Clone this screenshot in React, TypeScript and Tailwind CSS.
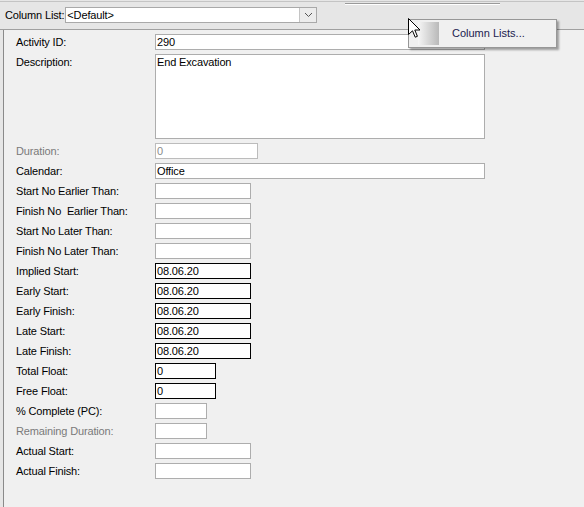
import React from 'react';

type Row = {
  label: string;
  value?: string;
  width: number;
  kind?: 'normal' | 'strong' | 'disabled';
  dimLabel?: boolean;
  tall?: boolean;
};

const rows: Row[] = [
  { label: 'Activity ID:', value: '290', width: 330 },
  { label: 'Description:', value: 'End Excavation', width: 330, tall: true },
  { label: 'Duration:', value: '0', width: 103, kind: 'disabled', dimLabel: true },
  { label: 'Calendar:', value: 'Office', width: 330 },
  { label: 'Start No Earlier Than:', width: 96 },
  { label: 'Finish No  Earlier Than:', width: 96 },
  { label: 'Start No Later Than:', width: 96 },
  { label: 'Finish No Later Than:', width: 96 },
  { label: 'Implied Start:', value: '08.06.20', width: 96, kind: 'strong' },
  { label: 'Early Start:', value: '08.06.20', width: 96, kind: 'strong' },
  { label: 'Early Finish:', value: '08.06.20', width: 96, kind: 'strong' },
  { label: 'Late Start:', value: '08.06.20', width: 96, kind: 'strong' },
  { label: 'Late Finish:', value: '08.06.20', width: 96, kind: 'strong' },
  { label: 'Total Float:', value: '0', width: 61, kind: 'strong' },
  { label: 'Free Float:', value: '0', width: 61, kind: 'strong' },
  { label: '% Complete (PC):', width: 52 },
  { label: 'Remaining Duration:', width: 52, dimLabel: true },
  { label: 'Actual Start:', width: 96 },
  { label: 'Actual Finish:', width: 96 },
];

const boxClass = (kind: Row['kind']) => {
  if (kind === 'strong') return 'border border-black text-black';
  if (kind === 'disabled') return 'border border-[#bcbcbc] text-[#8a8a8a]';
  return 'border border-[#adadad] text-black';
};

const FieldRow: React.FC<{ row: Row }> = ({ row }) => (
  <div className={`flex items-start ${row.tall ? 'h-[89px]' : 'h-[20px]'}`}>
    <div className={`w-[151px] shrink-0 pl-[12px] leading-[20px] whitespace-pre ${row.dimLabel ? 'text-[#7a7a7a]' : 'text-black'}`}>
      {row.label}
    </div>
    <div
      className={`mt-[2px] bg-white pl-[1px] leading-[14px] whitespace-pre ${boxClass(row.kind)} ${row.tall ? 'h-[85px]' : 'h-[16px]'}`}
      style={{ width: row.width }}
    >
      {row.value}
    </div>
  </div>
);

export default function App() {
  return (
    <div className="relative w-[584px] h-[507px] overflow-hidden bg-[#e6e6e6] text-[11px] font-['Liberation_Sans',Arial,sans-serif] tracking-[-0.15px]">
      {/* toolbar strip */}
      <div className="h-[29px] border-t border-t-[#c4c4c4] mt-[1px] border-b border-b-[#a0a0a0] relative">
        <div className="absolute left-[345px] top-[1px] w-[155px] h-[2px] border-t border-t-[#9a9a9a] border-b border-b-white" />
        <div className="flex items-center h-full pl-[5px] pb-[1px]">
          <span className="text-black">Column List:</span>
          <div className="ml-[1px] w-[252px] h-[16px] bg-white border border-[#a9a9a9] flex items-center">
            <span className="pl-[1px] leading-[14px] flex-1">&lt;Default&gt;</span>
            <div className="w-[17px] h-[14px] bg-[#ececec] border-l border-[#c4c4c4] flex items-center justify-center">
              <svg width="9" height="6" viewBox="0 0 9 6">
                <path d="M1 1 L4.5 4.5 L8 1" fill="none" stroke="#555" strokeWidth="1" />
              </svg>
            </div>
          </div>
        </div>
      </div>

      {/* form panel */}
      <div className="absolute left-[3px] top-[30px] right-0 bottom-0 bg-[#f0f0f0] border-l border-l-[#8a8a8a] pt-[2px]">
        {rows.map((r) => (
          <FieldRow key={r.label} row={r} />
        ))}
      </div>

      {/* context menu */}
      <div className="absolute left-[408px] top-[19px] w-[149px] h-[29px] bg-[#f0f0f0] border border-[#979797] shadow-[2px_2px_2px_rgba(0,0,0,0.35)] flex items-center">
        <div className="ml-[9px] w-[21px] h-[23px] bg-gradient-to-r from-[#f6f6f6] to-[#b9b9b9]" />
        <span className="ml-[13px] text-[#1a1a4e] tracking-normal">Column Lists...</span>
      </div>

      {/* mouse cursor */}
      <svg className="absolute left-[408px] top-[18px]" width="13" height="21" viewBox="0 0 13 21">
        <path
          d="M0.5 0.5 L0.5 16.5 L4.5 12.8 L7.2 19.2 L9.4 18.3 L6.8 12 L12 12 Z"
          fill="white"
          stroke="black"
          strokeWidth="1"
          strokeLinejoin="miter"
        />
      </svg>
    </div>
  );
}
